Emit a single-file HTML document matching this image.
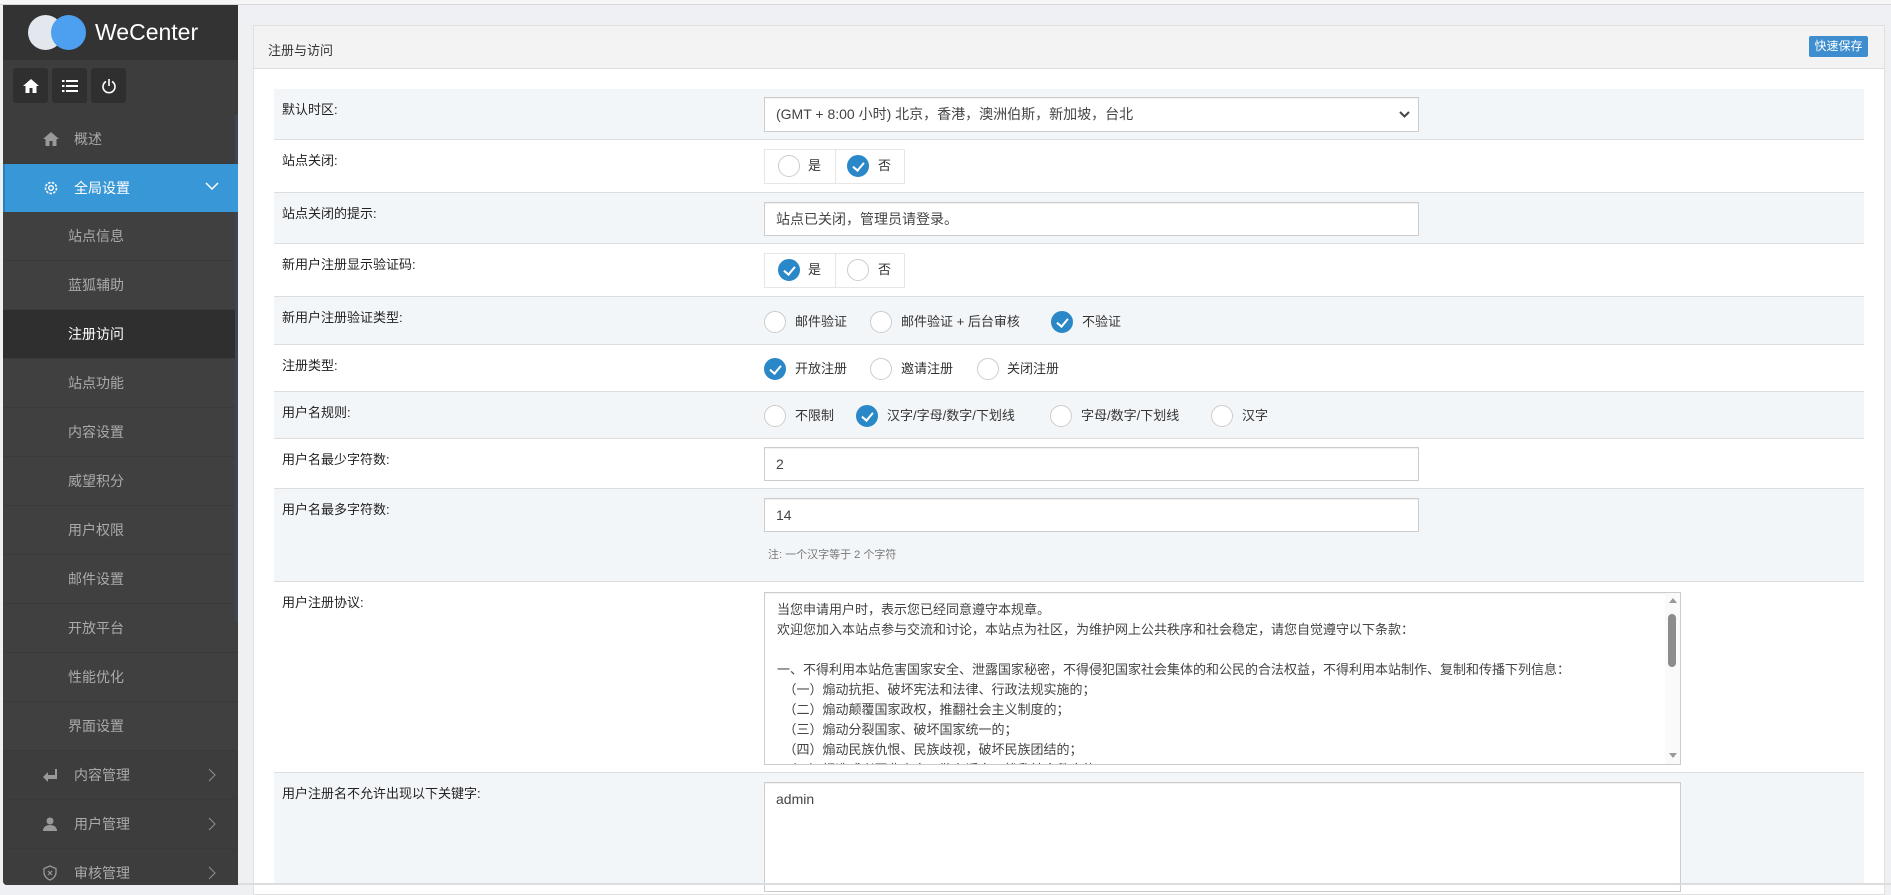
<!DOCTYPE html>
<html><head><meta charset="utf-8">
<style>
*{box-sizing:border-box;margin:0;padding:0}
body{width:1891px;height:885px;overflow:hidden;background:#eef0f3;font-family:"Liberation Sans","Noto Sans CJK SC",sans-serif;font-size:13px;color:#333;position:relative}
.abs{position:absolute}
#topbar{left:0;top:0;width:1891px;height:5px;background:#f6f6f6;border-bottom:1px solid #d8d8d8}
#side{left:3px;top:5px;width:235px;height:880px;background:#404040;overflow:hidden;border-bottom-left-radius:4px}
#logo{left:0;top:0;width:235px;height:55px;background:#333}
.tb{top:63px;width:35px;height:35px;background:#2f2f2f;border-radius:3px;display:flex;align-items:center;justify-content:center}
.nav{position:absolute;left:0;width:235px;height:49px;color:#aaa;font-size:14px;border-bottom:1px solid #3a3a3a}
.nav .t{position:absolute;top:0;line-height:49px;white-space:nowrap}
.sub .t{left:65px}
.top{background:#3d3d3d}
.top .t{left:71px}
.ic{position:absolute;left:39px;top:16px}
.chev{position:absolute;left:205px;top:17px}
#panel{left:253px;top:25px;width:1632px;height:870px;background:#fff;border:1px solid #e0e0e0}
#ph{left:0;top:0;width:1630px;height:43px;background:#f3f3f3;border-bottom:1px solid #ddd}
.row{left:274px;width:1590px;border-bottom:1px solid #ddd}
.alt{background:#f3f6f9}
.lbl{position:absolute;left:8px;top:10px;font-size:13px;color:#222}
.inp{position:absolute;border:1px solid #ccc;background:#fff;font-size:14px;color:#444;padding-left:11px;box-shadow:inset 0 1px 1px rgba(0,0,0,.06)}
.rg{position:absolute;border:1px solid #e6e6e6;background:#fff;height:35px}
.rad{position:absolute;width:22px;height:22px;border-radius:50%;border:1px solid #ccc;background:#fff}
.on{background:#2a88c8;border-color:#2a88c8}
.on::after{content:"";position:absolute;left:7px;top:4px;width:5px;height:9px;border:solid #fff;border-width:0 2px 2px 0;transform:rotate(40deg)}
.rt{position:absolute;font-size:13px;color:#333;line-height:22px}
</style></head><body>
<div id="topbar" class="abs"></div>
<div class="abs" style="left:0;top:5px;width:3px;height:880px;background:#f0f0f0"></div>
<div id="side" class="abs">
 <div id="logo" class="abs">
  <div class="abs" style="left:25px;top:10px;width:35px;height:35px;border-radius:50%;background:#e3e8ef"></div>
  <div class="abs" style="left:48px;top:10px;width:35px;height:35px;border-radius:50%;background:#4d9ff0"></div>
  <div class="abs" style="left:92px;top:12px;color:#fff;font-size:23px;line-height:30px">WeCenter</div>
 </div>
 <div class="abs" style="left:0;top:55px;width:235px;height:55px;background:#3d3d3d"></div>
 <div class="abs tb" style="left:10px"><svg width="18" height="16" viewBox="0 0 18 16"><path d="M9 1L1 8h2.5v7h4v-5h3v5h4V8H17z" fill="#fff"/></svg></div>
 <div class="abs tb" style="left:49px"><svg width="16" height="14" viewBox="0 0 16 14"><g fill="#fff"><rect x="0" y="1" width="2.5" height="2"/><rect x="4" y="1" width="12" height="2"/><rect x="0" y="6" width="2.5" height="2"/><rect x="4" y="6" width="12" height="2"/><rect x="0" y="11" width="2.5" height="2"/><rect x="4" y="11" width="12" height="2"/></g></svg></div>
 <div class="abs tb" style="left:88px"><svg width="16" height="16" viewBox="0 0 16 16"><path d="M5 3.5A6 6 0 1 0 11 3.5" fill="none" stroke="#fff" stroke-width="1.6"/><path d="M8 1v7" stroke="#fff" stroke-width="1.6"/></svg></div>
 <div class="abs" style="left:232px;top:110px;width:3px;height:507px;background:#3b4753"></div>
 <div class="nav top" style="top:110px;width:232px"><svg class="ic" width="18" height="16" viewBox="0 0 18 16"><path d="M9 1L1 8h2.5v7h4v-5h3v5h4V8H17z" fill="#999"/></svg><span class="t">概述</span></div>
 <div class="nav" style="top:159px;background:#3897d6;color:#fff;border-left:2px solid #2a7fc0;border-bottom:none;height:48px"><svg class="ic" style="left:38px" width="16" height="16" viewBox="0 0 16 16"><circle cx="8" cy="8" r="5.5" fill="none" stroke="#fff" stroke-width="1.6" stroke-dasharray="2.5 1.3"/><circle cx="8" cy="8" r="2.3" fill="none" stroke="#fff" stroke-width="1.4"/></svg><span class="t" style="left:69px;line-height:48px">全局设置</span><svg class="abs" style="left:200px;top:18px" width="14" height="9" viewBox="0 0 14 9"><path d="M1 1l6 6 6-6" fill="none" stroke="#fff" stroke-width="1.5"/></svg></div>
 <div class="nav sub" style="top:207px;width:232px"><span class="t">站点信息</span></div>
 <div class="nav sub" style="top:256px;width:232px"><span class="t">蓝狐辅助</span></div>
 <div class="nav sub" style="top:305px;width:232px;background:#2f2f2f;color:#fff"><span class="t">注册访问</span></div>
 <div class="nav sub" style="top:354px;width:232px"><span class="t">站点功能</span></div>
 <div class="nav sub" style="top:403px;width:232px"><span class="t">内容设置</span></div>
 <div class="nav sub" style="top:452px;width:232px"><span class="t">威望积分</span></div>
 <div class="nav sub" style="top:501px;width:232px"><span class="t">用户权限</span></div>
 <div class="nav sub" style="top:550px;width:232px"><span class="t">邮件设置</span></div>
 <div class="nav sub" style="top:599px"><span class="t">开放平台</span></div>
 <div class="nav sub" style="top:648px"><span class="t">性能优化</span></div>
 <div class="nav sub" style="top:697px"><span class="t">界面设置</span></div>
 <div class="nav top" style="top:746px"><svg class="ic" width="16" height="16" viewBox="0 0 16 16"><path d="M13 2v6H6V5L1 10l5 5v-3h9V2z" fill="#999"/></svg><span class="t">内容管理</span><svg class="chev" width="8" height="14" viewBox="0 0 8 14"><path d="M1 1l6 6-6 6" fill="none" stroke="#888" stroke-width="1.2"/></svg></div>
 <div class="nav top" style="top:795px"><svg class="ic" width="16" height="16" viewBox="0 0 16 16"><circle cx="8" cy="5" r="3.5" fill="#999"/><path d="M1 15c0-4 3-6 7-6s7 2 7 6z" fill="#999"/></svg><span class="t">用户管理</span><svg class="chev" width="8" height="14" viewBox="0 0 8 14"><path d="M1 1l6 6-6 6" fill="none" stroke="#888" stroke-width="1.2"/></svg></div>
 <div class="nav top" style="top:844px"><svg class="ic" width="16" height="16" viewBox="0 0 16 16"><path d="M8 1L2 3.5v4C2 11 5 14 8 15c3-1 6-4 6-7.5v-4z" fill="none" stroke="#999" stroke-width="1.3"/><path d="M6 6l4 4M10 6l-4 4" stroke="#999" stroke-width="1.2"/></svg><span class="t">审核管理</span><svg class="chev" width="8" height="14" viewBox="0 0 8 14"><path d="M1 1l6 6-6 6" fill="none" stroke="#888" stroke-width="1.2"/></svg></div>
</div>

<div id="panel" class="abs">
 <div id="ph" class="abs"><div class="abs" style="left:14px;top:14px;font-size:13px;color:#333">注册与访问</div>
 <div class="abs" style="left:1555px;top:10px;width:59px;height:21px;background:#3d8dcf;border-radius:2px;color:#fff;font-size:12px;line-height:21px;text-align:center">快速保存</div></div>
</div>

<div class="abs row alt" style="top:89px;height:51px"><div class="lbl">默认时区:</div></div>
<div class="abs inp" style="left:764px;top:97px;width:655px;height:35px;line-height:33px">(GMT + 8:00 小时) 北京，香港，澳洲伯斯，新加坡，台北<svg class="abs" style="right:8px;top:13px" width="11" height="8" viewBox="0 0 11 8"><path d="M1 1l4.5 4.5L10 1" fill="none" stroke="#444" stroke-width="2"/></svg></div>

<div class="abs row" style="top:140px;height:53px"><div class="lbl">站点关闭:</div></div>
<div class="rg abs" style="left:764px;top:149px;width:141px"><div class="abs" style="left:70px;top:0;width:1px;height:33px;background:#e6e6e6"></div></div>
<div class="rad" style="left:778px;top:155px"></div><div class="rt" style="left:808px;top:155px">是</div>
<div class="rad on" style="left:847px;top:155px"></div><div class="rt" style="left:878px;top:155px">否</div>

<div class="abs row alt" style="top:193px;height:51px"><div class="lbl">站点关闭的提示:</div></div>
<div class="abs inp" style="left:764px;top:202px;width:655px;height:34px;line-height:32px">站点已关闭，管理员请登录。</div>

<div class="abs row" style="top:244px;height:53px"><div class="lbl">新用户注册显示验证码:</div></div>
<div class="rg abs" style="left:764px;top:253px;width:141px"><div class="abs" style="left:70px;top:0;width:1px;height:33px;background:#e6e6e6"></div></div>
<div class="rad on" style="left:778px;top:259px"></div><div class="rt" style="left:808px;top:259px">是</div>
<div class="rad" style="left:847px;top:259px"></div><div class="rt" style="left:878px;top:259px">否</div>

<div class="abs row alt" style="top:297px;height:48px"><div class="lbl">新用户注册验证类型:</div></div>
<div class="rad" style="left:764px;top:311px"></div><div class="rt" style="left:795px;top:311px">邮件验证</div>
<div class="rad" style="left:870px;top:311px"></div><div class="rt" style="left:901px;top:311px">邮件验证 + 后台审核</div>
<div class="rad on" style="left:1051px;top:311px"></div><div class="rt" style="left:1082px;top:311px">不验证</div>

<div class="abs row" style="top:345px;height:47px"><div class="lbl">注册类型:</div></div>
<div class="rad on" style="left:764px;top:358px"></div><div class="rt" style="left:795px;top:358px">开放注册</div>
<div class="rad" style="left:870px;top:358px"></div><div class="rt" style="left:901px;top:358px">邀请注册</div>
<div class="rad" style="left:977px;top:358px"></div><div class="rt" style="left:1007px;top:358px">关闭注册</div>

<div class="abs row alt" style="top:392px;height:47px"><div class="lbl">用户名规则:</div></div>
<div class="rad" style="left:764px;top:405px"></div><div class="rt" style="left:795px;top:405px">不限制</div>
<div class="rad on" style="left:856px;top:405px"></div><div class="rt" style="left:887px;top:405px">汉字/字母/数字/下划线</div>
<div class="rad" style="left:1050px;top:405px"></div><div class="rt" style="left:1081px;top:405px">字母/数字/下划线</div>
<div class="rad" style="left:1211px;top:405px"></div><div class="rt" style="left:1242px;top:405px">汉字</div>

<div class="abs row" style="top:439px;height:50px"><div class="lbl">用户名最少字符数:</div></div>
<div class="abs inp" style="left:764px;top:447px;width:655px;height:34px;line-height:32px">2</div>

<div class="abs row alt" style="top:489px;height:93px"><div class="lbl">用户名最多字符数:</div></div>
<div class="abs inp" style="left:764px;top:498px;width:655px;height:34px;line-height:32px">14</div>
<div class="abs" style="left:768px;top:546px;font-size:11px;color:#777">注: 一个汉字等于 2 个字符</div>

<div class="abs row" style="top:582px;height:191px"><div class="lbl">用户注册协议:</div></div>
<div class="abs inp" style="left:764px;top:592px;width:917px;height:173px;overflow:hidden;padding:7px 0 0 12px;font-size:13px;line-height:20px;color:#444;white-space:pre">当您申请用户时，表示您已经同意遵守本规章。
欢迎您加入本站点参与交流和讨论，本站点为社区，为维护网上公共秩序和社会稳定，请您自觉遵守以下条款：

一、不得利用本站危害国家安全、泄露国家秘密，不得侵犯国家社会集体的和公民的合法权益，不得利用本站制作、复制和传播下列信息：
　（一）煽动抗拒、破坏宪法和法律、行政法规实施的；
　（二）煽动颠覆国家政权，推翻社会主义制度的；
　（三）煽动分裂国家、破坏国家统一的；
　（四）煽动民族仇恨、民族歧视，破坏民族团结的；
　（五）捏造或者歪曲事实，散布谣言，扰乱社会秩序的；
<div class="abs" style="right:0;top:0;width:15px;height:171px;background:#fafafa"><div class="abs" style="left:4px;top:5px;width:0;height:0;border:4px solid transparent;border-bottom:5px solid #999;border-top:none"></div><div class="abs" style="left:3px;top:21px;width:8px;height:53px;background:#8c8c8c;border-radius:4px"></div><div class="abs" style="left:4px;top:160px;width:0;height:0;border:4px solid transparent;border-top:5px solid #999;border-bottom:none"></div></div></div>

<div class="abs row alt" style="top:773px;height:112px;border-bottom:none"><div class="lbl">用户注册名不允许出现以下关键字:</div></div>
<div class="abs inp" style="left:764px;top:782px;width:917px;height:110px;padding-top:6px;line-height:20px;font-size:14px">admin</div>
<div class="abs" style="left:238px;top:883px;width:1653px;height:2px;background:#ddd"></div>
</body></html>
